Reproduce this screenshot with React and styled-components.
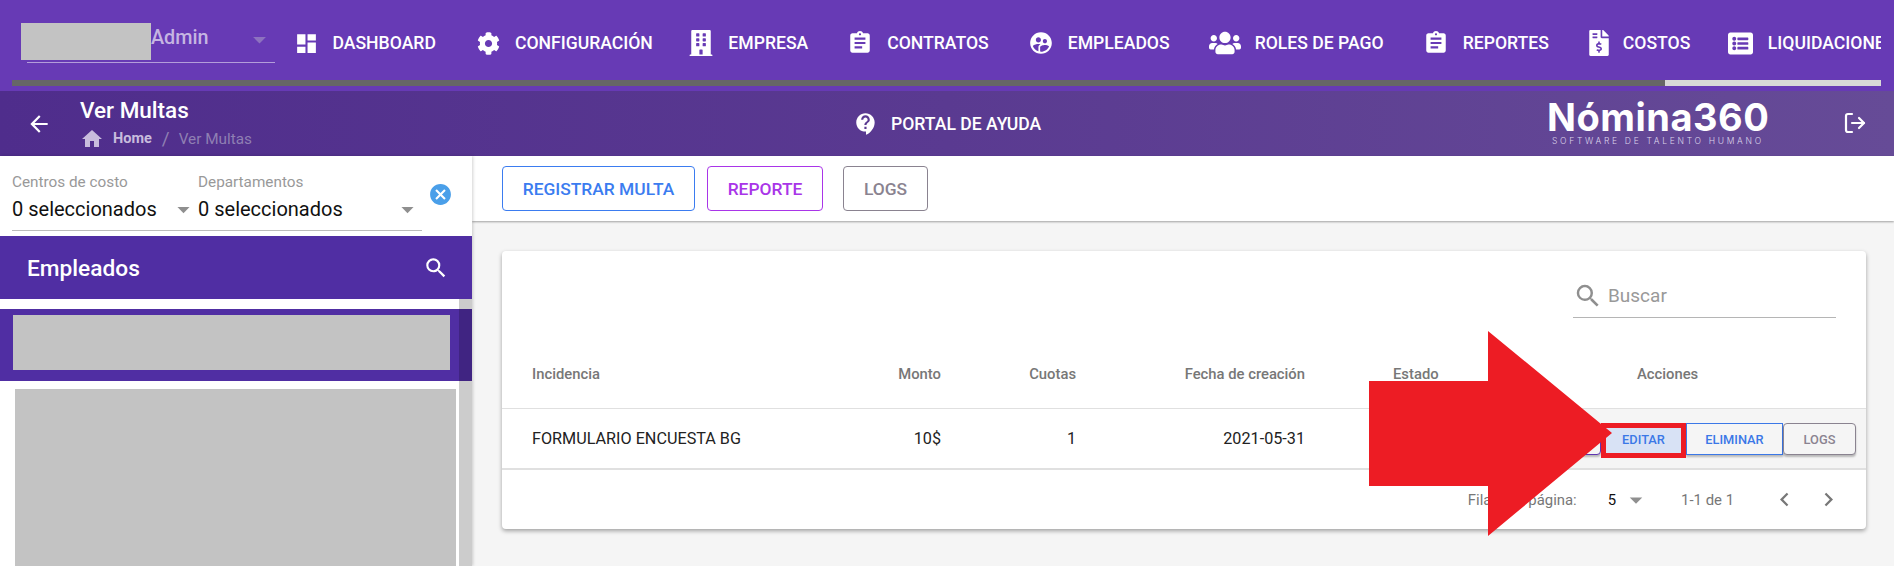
import React from "react";
import styled, { createGlobalStyle } from "styled-components";
import { MdDashboard, MdAssignment, MdSupervisedUserCircle, MdContactSupport, MdArrowBack, MdHome, MdCancel, MdSearch, MdChevronLeft, MdChevronRight, MdArrowDropDown } from "react-icons/md";
import { FaCog, FaBuilding, FaUsers, FaFileInvoiceDollar, FaListAlt } from "react-icons/fa";
import { LogOut } from "lucide-react";

const Global = createGlobalStyle`
  html, body { margin: 0; padding: 0; height: 100%; overflow: hidden; background: #f5f5f5; }
  * { box-sizing: border-box; }
  body { font-family: Roboto, "Liberation Sans", sans-serif; }
`;

const Page = styled.div`
  width: 1894px;
  height: 566px;
  overflow: hidden;
  position: relative;
  display: flex;
  flex-direction: column;
`;
const TopBar = styled.header`
  height: 91px;
  background: #673ab5;
  display: flex;
  flex-direction: column;
  flex: none;
`;
const TopRow = styled.div`
  height: 80px;
  display: flex;
  align-items: flex-start;
  padding-right: 13px;
`;
const UserSelect = styled.div`
  margin: 23px 0 0 27px;
  width: 248px;
  height: 40px;
  flex: none;
  display: flex;
  align-items: flex-start;
  border-bottom: 1px solid rgba(255, 255, 255, 0.5);
  color: #c5b5e2;
  font-size: 19.8px;
  font-weight: 500;
  line-height: 30px;
`;
const Redacted = styled.div`
  background: #c3c3c3;
  flex: none;
  width: ${(p) => p.$w};
  height: ${(p) => p.$h};
  margin: ${(p) => p.$m || 0};
`;
const Caret = styled(MdArrowDropDown)`
  flex: none;
  color: #8f8f8f;
`;
const UserCaret = styled(MdArrowDropDown)`
  flex: none;
  color: #8d72bf;
  margin: 1px 0 0 auto;
`;
const Tabs = styled.nav`
  display: flex;
  overflow: hidden;
  flex: 1;
  height: 80px;
  padding-top: 4px;
`;
const Tab = styled.a`
  flex: none;
  display: flex;
  align-items: center;
  height: 78px;
  padding: 0 19.5px;
  margin-left: ${(p) => p.$ml || 0}px;
  gap: ${(p) => p.$gap}px;
  color: #fff;
  font-size: 17.6px;
  font-weight: 500;
  white-space: nowrap;
  svg { flex: none; }
`;
const ScrollTrack = styled.div`
  height: 6px;
  margin: 0 13px 0 12px;
  background: #666;
  display: flex;
  justify-content: flex-end;
  flex: none;
`;
const ScrollThumb = styled.div`
  width: 216px;
  background: #d8d8d8;
`;
const SubBar = styled.div`
  height: 65px;
  flex: none;
  display: flex;
  align-items: center;
  padding-right: 27px;
  color: #fff;
  background: linear-gradient(90deg, #4f2d8c 0%, #5a3a91 50%, #664b97 100%);
`;
const BackButton = styled.div`
  width: 80px;
  padding-left: 26px;
  display: flex;
  flex: none;
`;
const Crumbs = styled.div`
  width: 773px;
  flex: none;
  display: flex;
  flex-direction: column;
`;
const PageTitle = styled.div`
  font-size: 22.5px;
  font-weight: 500;
  line-height: 26px;
`;
const Trail = styled.div`
  display: flex;
  align-items: center;
  margin-top: 4px;
  font-size: 15.3px;
  color: #8f7fb3;
  line-height: 20px;
`;
const TrailHome = styled.span`
  display: flex;
  align-items: center;
  gap: 9px;
  font-size: 14.5px;
  font-weight: 700;
  color: #c8bcdd;
`;
const TrailSep = styled.span`
  margin: 0 9px 0 10px;
  font-size: 19px;
`;
const Help = styled.div`
  display: flex;
  align-items: center;
  gap: 12px;
  flex: none;
  font-size: 17.6px;
  font-weight: 500;
`;
const Logo = styled.div`
  width: 294px;
  flex: none;
  display: flex;
  flex-direction: column;
  align-items: flex-start;
  margin-left: auto;
`;
const LogoName = styled.div`
  font-family: Inter, "Open Sans", sans-serif;
  font-size: 38px;
  line-height: 30px;
  font-weight: 700;
  letter-spacing: 0.5px;
`;
const LogoTag = styled.div`
  font-family: Inter, sans-serif;
  font-size: 8.5px;
  font-weight: 300;
  letter-spacing: 2.7px;
  line-height: 10px;
  margin: 4px 0 0 5px;
  color: #dcd4ea;
  white-space: nowrap;
`;
const LogoutIcon = styled(LogOut)`
  margin: -2px 0 0 2px;
  flex: none;
`;
const Content = styled.div`
  flex: 1;
  display: flex;
  min-height: 0;
`;
const Sidebar = styled.aside`
  width: 472px;
  flex: none;
  background: #fff;
  display: flex;
  flex-direction: column;
  box-shadow: 1px 0 3px rgba(0, 0, 0, 0.18);
  z-index: 1;
`;
const Filters = styled.div`
  height: 80px;
  padding: 17px 0 0 12px;
  display: flex;
  flex: none;
`;
const FilterFields = styled.div`
  width: 410px;
  height: 58px;
  display: flex;
  border-bottom: 1px solid #bbb;
`;
const Field = styled.div`
  width: ${(p) => p.$w}px;
  flex: none;
  display: flex;
  flex-direction: column;
`;
const FieldLabel = styled.div`
  font-size: 15.3px;
  line-height: 18px;
  color: #999;
`;
const FieldValue = styled.div`
  display: flex;
  align-items: center;
  justify-content: space-between;
  font-size: 20px;
  line-height: 26px;
  height: 26px;
  margin-top: 5px;
  color: #111;
`;
const ClearIcon = styled(MdCancel)`
  color: #4a9fe9;
  margin: 9px 0 0 6px;
  flex: none;
`;
const EmployeesHeader = styled.div`
  height: 63px;
  flex: none;
  background: #502ea3;
  color: #fff;
  display: flex;
  align-items: center;
  justify-content: space-between;
  padding: 1px 23px 0 27px;
  font-size: 22.7px;
  font-weight: 500;
`;
const EmployeeList = styled.div`
  flex: 1;
  position: relative;
  padding-top: 10px;
  overflow: hidden;
`;
const SelectedRow = styled.div`
  height: 72px;
  background: #502ea3;
  padding: 6px 0 0 13px;
`;
const OtherRows = styled.div`
  padding: 8px 0 0 15px;
`;
const ListScrollbar = styled.div`
  position: absolute;
  top: 0;
  right: 0;
  bottom: 0;
  width: 13px;
  background: rgba(0, 0, 0, 0.2);
`;
const Main = styled.main`
  flex: 1;
  background: #f5f5f5;
  min-width: 0;
`;
const Toolbar = styled.div`
  height: 65px;
  background: #fff;
  display: flex;
  align-items: flex-start;
  padding: 10px 0 0 30px;
  box-shadow: 0 1px 2px rgba(0, 0, 0, 0.35);
`;
const OutlineButton = styled.button`
  height: 45px;
  width: ${(p) => p.$w}px;
  margin-right: ${(p) => p.$mr || 0}px;
  background: #fff;
  border: 1px solid ${(p) => p.$color};
  border-radius: 4px;
  color: ${(p) => p.$color};
  font: 500 17.4px Roboto, sans-serif;
  padding: 0;
`;
const Card = styled.section`
  margin: 30px 28px 0 30px;
  height: 278px;
  background: #fff;
  border-radius: 4px;
  box-shadow: 0 2px 4px rgba(0, 0, 0, 0.35);
  display: flex;
  flex-direction: column;
`;
const SearchRow = styled.div`
  height: 89px;
  display: flex;
  justify-content: flex-end;
  padding: 27px 30px 0 0;
  flex: none;
`;
const SearchField = styled.div`
  width: 263px;
  height: 40px;
  display: flex;
  align-items: center;
  gap: 5px;
  padding-bottom: 4px;
  border-bottom: 1px solid #b5b5b5;
  color: #999;
  font-size: 19px;
  svg { color: #8f8f8f; }
`;
const GRID = "330px 109px 135px 229px 88px 244px 1fr";
const HeadRow = styled.div`
  height: 69px;
  flex: none;
  display: grid;
  grid-template-columns: ${GRID};
  align-items: center;
  border-bottom: 1px solid #e0e0e0;
  font-size: 14.8px;
  font-weight: 500;
  color: #777;
`;
const BodyRow = styled.div`
  height: 61px;
  flex: none;
  display: grid;
  grid-template-columns: ${GRID};
  align-items: center;
  border-bottom: 2px solid #e0e0e0;
  font-size: 16.2px;
  color: #222;
`;
const Cell = styled.div`
  text-align: ${(p) => (p.$right ? "right" : "left")};
  padding-left: ${(p) => p.$pl || 0}px;
  white-space: nowrap;
  ${(p) => p.$col && `grid-column: ${p.$col};`}
`;
const Actions = styled.div`
  grid-column: 6 / 8;
  align-self: stretch;
  background: #f5f5f5;
  display: flex;
  justify-content: flex-end;
  padding: 14px 10px 0 0;
  align-items: flex-start;
`;
const RowButton = styled.button`
  height: 32px;
  width: ${(p) => p.$w}px;
  flex: none;
  background: ${(p) => p.$bg || "#f5f5f5"};
  border: 1px solid ${(p) => p.$color};
  border-radius: ${(p) => p.$radius || 0}px;
  color: ${(p) => p.$color};
  font: 500 12.8px Roboto, sans-serif;
  padding: 0;
  box-shadow: 0 2px 2px rgba(0, 0, 0, 0.25);
`;
const HighlightButton = styled(RowButton)`
  position: relative;
  height: 35px;
  border: 5px solid #ed1c24;
  padding-bottom: 3px;
  background: #d8e2f5;
  color: #3b78e7;
  box-shadow: none;
  z-index: 1;
`;
const Pagination = styled.div`
  flex: 1;
  display: flex;
  align-items: center;
  justify-content: flex-end;
  font-size: 14.9px;
  color: #777;
  padding-right: 24.5px;
`;
const PageSize = styled.span`
  display: flex;
  align-items: center;
  color: #111;
  margin: 0 30px 0 31px;
  gap: 5px;
`;
const PageNav = styled.span`
  display: flex;
  align-items: center;
  gap: 16.5px;
  margin-left: 37px;
  svg { color: #777; }
`;
const Arrow = styled.svg`
  position: absolute;
  left: 1369px;
  top: 331px;
  z-index: 5;
`;

const TABS = [
  { label: "DASHBOARD", Icon: MdDashboard, size: 25, gap: 14, ml: -1 },
  { label: "CONFIGURACIÓN", Icon: FaCog, size: 23, gap: 15, ml: 2 },
  { label: "EMPRESA", Icon: FaBuilding, size: 26, gap: 14, ml: -3.5 },
  { label: "CONTRATOS", Icon: MdAssignment, size: 26, gap: 14 },
  { label: "EMPLEADOS", Icon: MdSupervisedUserCircle, size: 26, gap: 14 },
  { label: "ROLES DE PAGO", Icon: FaUsers, size: 32, gap: 14 },
  { label: "REPORTES", Icon: MdAssignment, size: 26, gap: 14 },
  { label: "COSTOS", Icon: FaFileInvoiceDollar, size: 26, gap: 11, ml: -2 },
  { label: "LIQUIDACIONES", Icon: FaListAlt, size: 25, gap: 15, ml: -1.5 },
];

export default function App() {
  return (
    <Page>
      <Global />
      <TopBar>
        <TopRow>
          <UserSelect>
            <Redacted $w="130px" $h="37px" $m="0 0 0 -6px" />
            Admin
            <UserCaret size={31} />
          </UserSelect>
          <Tabs>
            {TABS.map(({ label, Icon, size, gap, ml }) => (
              <Tab key={label} $gap={gap} $ml={ml}>
                <Icon size={size} />
                {label}
              </Tab>
            ))}
          </Tabs>
        </TopRow>
        <ScrollTrack>
          <ScrollThumb />
        </ScrollTrack>
      </TopBar>
      <SubBar>
        <BackButton>
          <MdArrowBack size={26} />
        </BackButton>
        <Crumbs>
          <PageTitle>Ver Multas</PageTitle>
          <Trail>
            <TrailHome>
              <MdHome size={24} />
              Home
            </TrailHome>
            <TrailSep>/</TrailSep>
            Ver Multas
          </Trail>
        </Crumbs>
        <Help>
          <MdContactSupport size={26} />
          PORTAL DE AYUDA
        </Help>
        <Logo>
          <LogoName>Nómina360</LogoName>
          <LogoTag>SOFTWARE DE TALENTO HUMANO</LogoTag>
        </Logo>
        <LogoutIcon size={24} strokeWidth={2.2} />
      </SubBar>
      <Content>
        <Sidebar>
          <Filters>
            <FilterFields>
              <Field $w={186}>
                <FieldLabel>Centros de costo</FieldLabel>
                <FieldValue>0 seleccionados<Caret size={29} /></FieldValue>
              </Field>
              <Field $w={224}>
                <FieldLabel>Departamentos</FieldLabel>
                <FieldValue>0 seleccionados<Caret size={29} /></FieldValue>
              </Field>
            </FilterFields>
            <ClearIcon size={25} />
          </Filters>
          <EmployeesHeader>
            Empleados
            <MdSearch size={26} />
          </EmployeesHeader>
          <EmployeeList>
            <SelectedRow>
              <Redacted $w="437px" $h="55px" />
            </SelectedRow>
            <OtherRows>
              <Redacted $w="441px" $h="300px" />
            </OtherRows>
            <ListScrollbar />
          </EmployeeList>
        </Sidebar>
        <Main>
          <Toolbar>
            <OutlineButton $w={193} $mr={12} $color="#3b7cf0">REGISTRAR MULTA</OutlineButton>
            <OutlineButton $w={116} $mr={20} $color="#a935e8">REPORTE</OutlineButton>
            <OutlineButton $w={85} $color="#8a8390">LOGS</OutlineButton>
          </Toolbar>
          <Card>
            <SearchRow>
              <SearchField>
                <MdSearch size={30} />
                Buscar
              </SearchField>
            </SearchRow>
            <HeadRow>
              <Cell $pl={30}>Incidencia</Cell>
              <Cell $right>Monto</Cell>
              <Cell $right>Cuotas</Cell>
              <Cell $right>Fecha de creación</Cell>
              <Cell $col="6">Estado</Cell>
              <Cell>Acciones</Cell>
            </HeadRow>
            <BodyRow>
              <Cell $pl={30}>FORMULARIO ENCUESTA BG</Cell>
              <Cell $right>10$</Cell>
              <Cell $right>1</Cell>
              <Cell $right>2021-05-31</Cell>
              <Actions>
                <RowButton $w={82} $color="#5e35b1" $radius={4} />
                <HighlightButton $w={85} $color="#ed1c24">EDITAR</HighlightButton>
                <RowButton $w={97} $color="#3b78e7">ELIMINAR</RowButton>
                <RowButton $w={73} $color="#8a8390" $radius={4}>LOGS</RowButton>
              </Actions>
            </BodyRow>
            <Pagination>
              Filas por página:
              <PageSize>
                5
                <Caret size={30} />
              </PageSize>
              1-1 de 1
              <PageNav>
                <MdChevronLeft size={27} />
                <MdChevronRight size={27} />
              </PageNav>
            </Pagination>
          </Card>
        </Main>
      </Content>
      <Arrow width="244" height="206" viewBox="0 0 244 206">
        <polygon points="0,50 119,50 119,0 243,102 119,205 119,155 0,155" fill="#ed1c24" />
      </Arrow>
    </Page>
  );
}
